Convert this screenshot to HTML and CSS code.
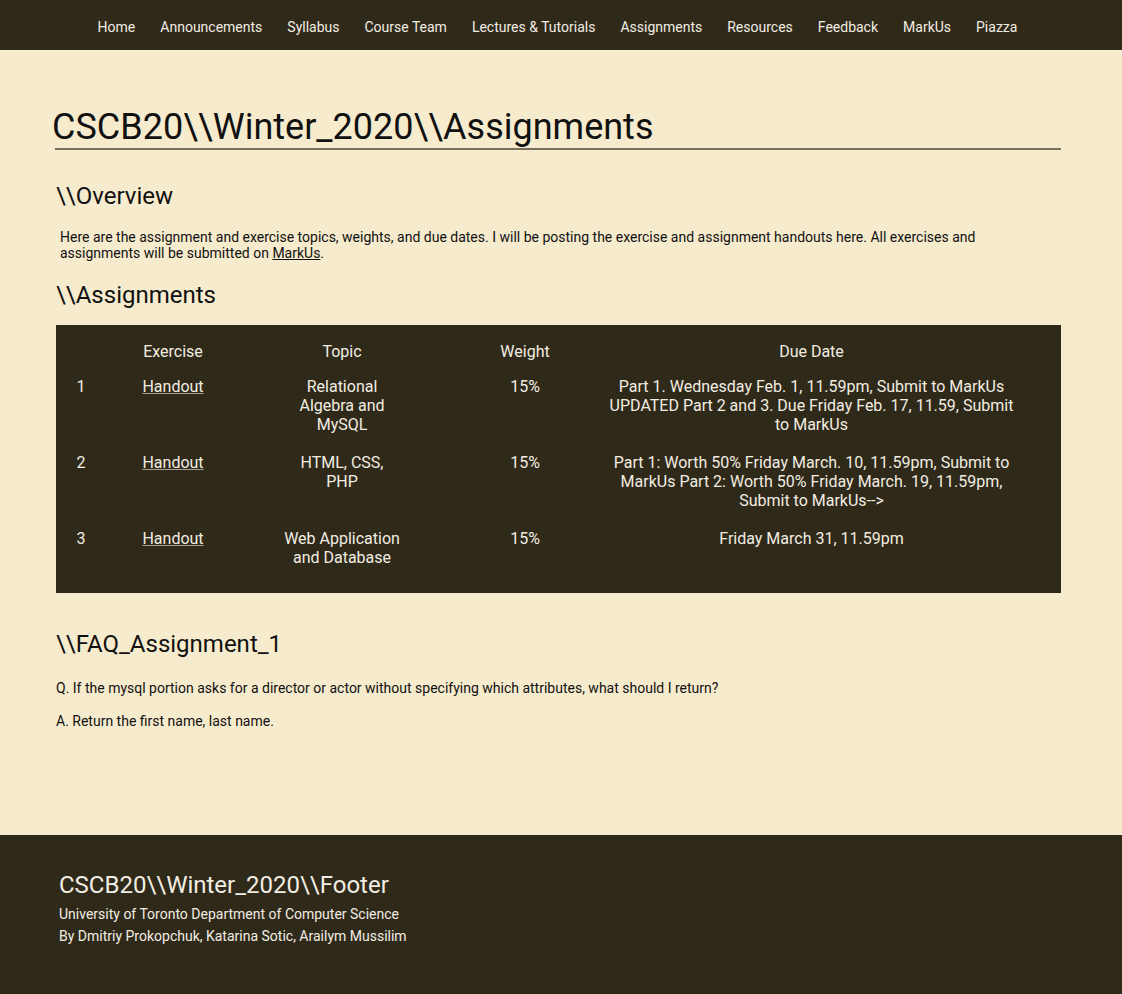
FILE: index.html
```html
<!DOCTYPE html>
<html lang="en">
<head>
<meta charset="utf-8">
<title>CSCB20 Assignments</title>
<link rel="stylesheet" href="styles.css">
</head>
<body>
<nav class="topnav">
  <a href="#">Home</a>
  <a href="#">Announcements</a>
  <a href="#">Syllabus</a>
  <a href="#">Course Team</a>
  <a href="#">Lectures &amp; Tutorials</a>
  <a href="#">Assignments</a>
  <a href="#">Resources</a>
  <a href="#">Feedback</a>
  <a href="#">MarkUs</a>
  <a href="#">Piazza</a>
</nav>
<main class="content">
  <h1 class="page-title">CSCB20\\Winter_2020\\Assignments</h1>
  <h2 class="section-title overview-title">\\Overview</h2>
  <p class="overview-text">Here are the assignment and exercise topics, weights, and due dates. I will be posting the exercise and assignment handouts here. All exercises and assignments will be submitted on <a href="#">MarkUs</a>.</p>
  <h2 class="section-title assign-title">\\Assignments</h2>
  <div class="table-wrap">
    <table class="assign-table">
      <colgroup>
        <col class="c-num"><col class="c-ex"><col class="c-topic"><col class="c-weight"><col class="c-due">
      </colgroup>
      <thead>
        <tr><th></th><th>Exercise</th><th class="topic">Topic</th><th>Weight</th><th>Due Date</th></tr>
      </thead>
      <tbody>
        <tr>
          <td>1</td><td><a href="#">Handout</a></td><td class="topic">Relational Algebra and MySQL</td><td>15%</td>
          <td>Part 1. Wednesday Feb. 1, 11.59pm, Submit to MarkUs UPDATED Part 2 and 3. Due Friday Feb. 17, 11.59, Submit to MarkUs</td>
        </tr>
        <tr>
          <td>2</td><td><a href="#">Handout</a></td><td class="topic">HTML, CSS, PHP</td><td>15%</td>
          <td>Part 1: Worth 50% Friday March. 10, 11.59pm, Submit to MarkUs Part 2: Worth 50% Friday March. 19, 11.59pm, Submit to MarkUs--&gt;</td>
        </tr>
        <tr>
          <td>3</td><td><a href="#">Handout</a></td><td class="topic">Web Application and Database</td><td>15%</td>
          <td>Friday March 31, 11.59pm</td>
        </tr>
      </tbody>
    </table>
  </div>
  <h2 class="section-title faq-title">\\FAQ_Assignment_1</h2>
  <p class="faq-text">Q. If the mysql portion asks for a director or actor without specifying which attributes, what should I return?</p>
  <p class="faq-text">A. Return the first name, last name.</p>
</main>
<footer class="footer">
  <h2 class="footer-title">CSCB20\\Winter_2020\\Footer</h2>
  <p class="footer-line">University of Toronto Department of Computer Science</p>
  <p class="footer-line">By Dmitriy Prokopchuk, Katarina Sotic, Arailym Mussilim</p>
</footer>
</body>
</html>
```
FILE: styles.css
```css
html, body {
  margin: 0;
  padding: 0;
}
body {
  background: #f7ebcd;
  font-family: Roboto, "Liberation Sans", sans-serif;
  color: #111;
}
.topnav {
  background: #2f2919;
  height: 46px;
  padding: 4px 7px 0 0;
  display: flex;
  align-items: center;
  justify-content: center;
  gap: 25px;
}
.topnav a {
  color: #f2ede2;
  text-decoration: none;
  font-size: 14px;
}
.content {
  padding: 56px 61px 106px 56px;
}
.page-title {
  margin: 0 0 0 -1px;
  font-size: 36px;
  font-weight: 400;
  line-height: 42px;
  border-bottom: 2px solid #7a705f;
  text-indent: -3px;
  color: #111;
}
.section-title {
  font-size: 24px;
  font-weight: 400;
  line-height: 28px;
  margin: 0;
}
.overview-title {
  margin-top: 32px;
}
.overview-text {
  font-size: 14px;
  line-height: 16px;
  margin: 19px 0 0;
  padding-left: 4px;
  padding-right: 80px;
}
.overview-text a {
  color: #111;
}
.assign-title {
  margin-top: 20px;
}
.table-wrap {
  margin-top: 16px;
  background: #2f2919;
  padding: 0 44px 15px 0;
}
.assign-table {
  width: 100%;
  table-layout: fixed;
  border-collapse: collapse;
  color: #f2ede2;
  font-size: 16px;
  line-height: 19px;
}
.c-num { width: 50px; }
.c-ex { width: 134px; }
.c-topic { width: 204px; }
.c-weight { width: 162px; }
.assign-table th {
  font-weight: 400;
  padding: 17px 0 8px;
  text-align: center;
}
.assign-table td {
  padding: 8px 0 11px;
  text-align: center;
  vertical-align: top;
}
.assign-table .topic {
  padding-left: 44px;
  padding-right: 44px;
}
.assign-table a {
  color: #f2ede2;
  text-decoration-color: #a8a194;
}
.faq-title {
  margin-top: 37px;
}
.faq-text {
  font-size: 14px;
  line-height: 16px;
  margin: 22px 0 0;
}
.faq-text + .faq-text {
  margin-top: 17px;
}
.footer {
  background: #2f2919;
  color: #f2ede2;
  padding: 36px 59px 48px;
}
.footer-title {
  margin: 0 0 4px;
  font-size: 24px;
  font-weight: 400;
  line-height: 28px;
}
.footer-line {
  margin: 0;
  font-size: 14px;
  line-height: 22px;
}
```
